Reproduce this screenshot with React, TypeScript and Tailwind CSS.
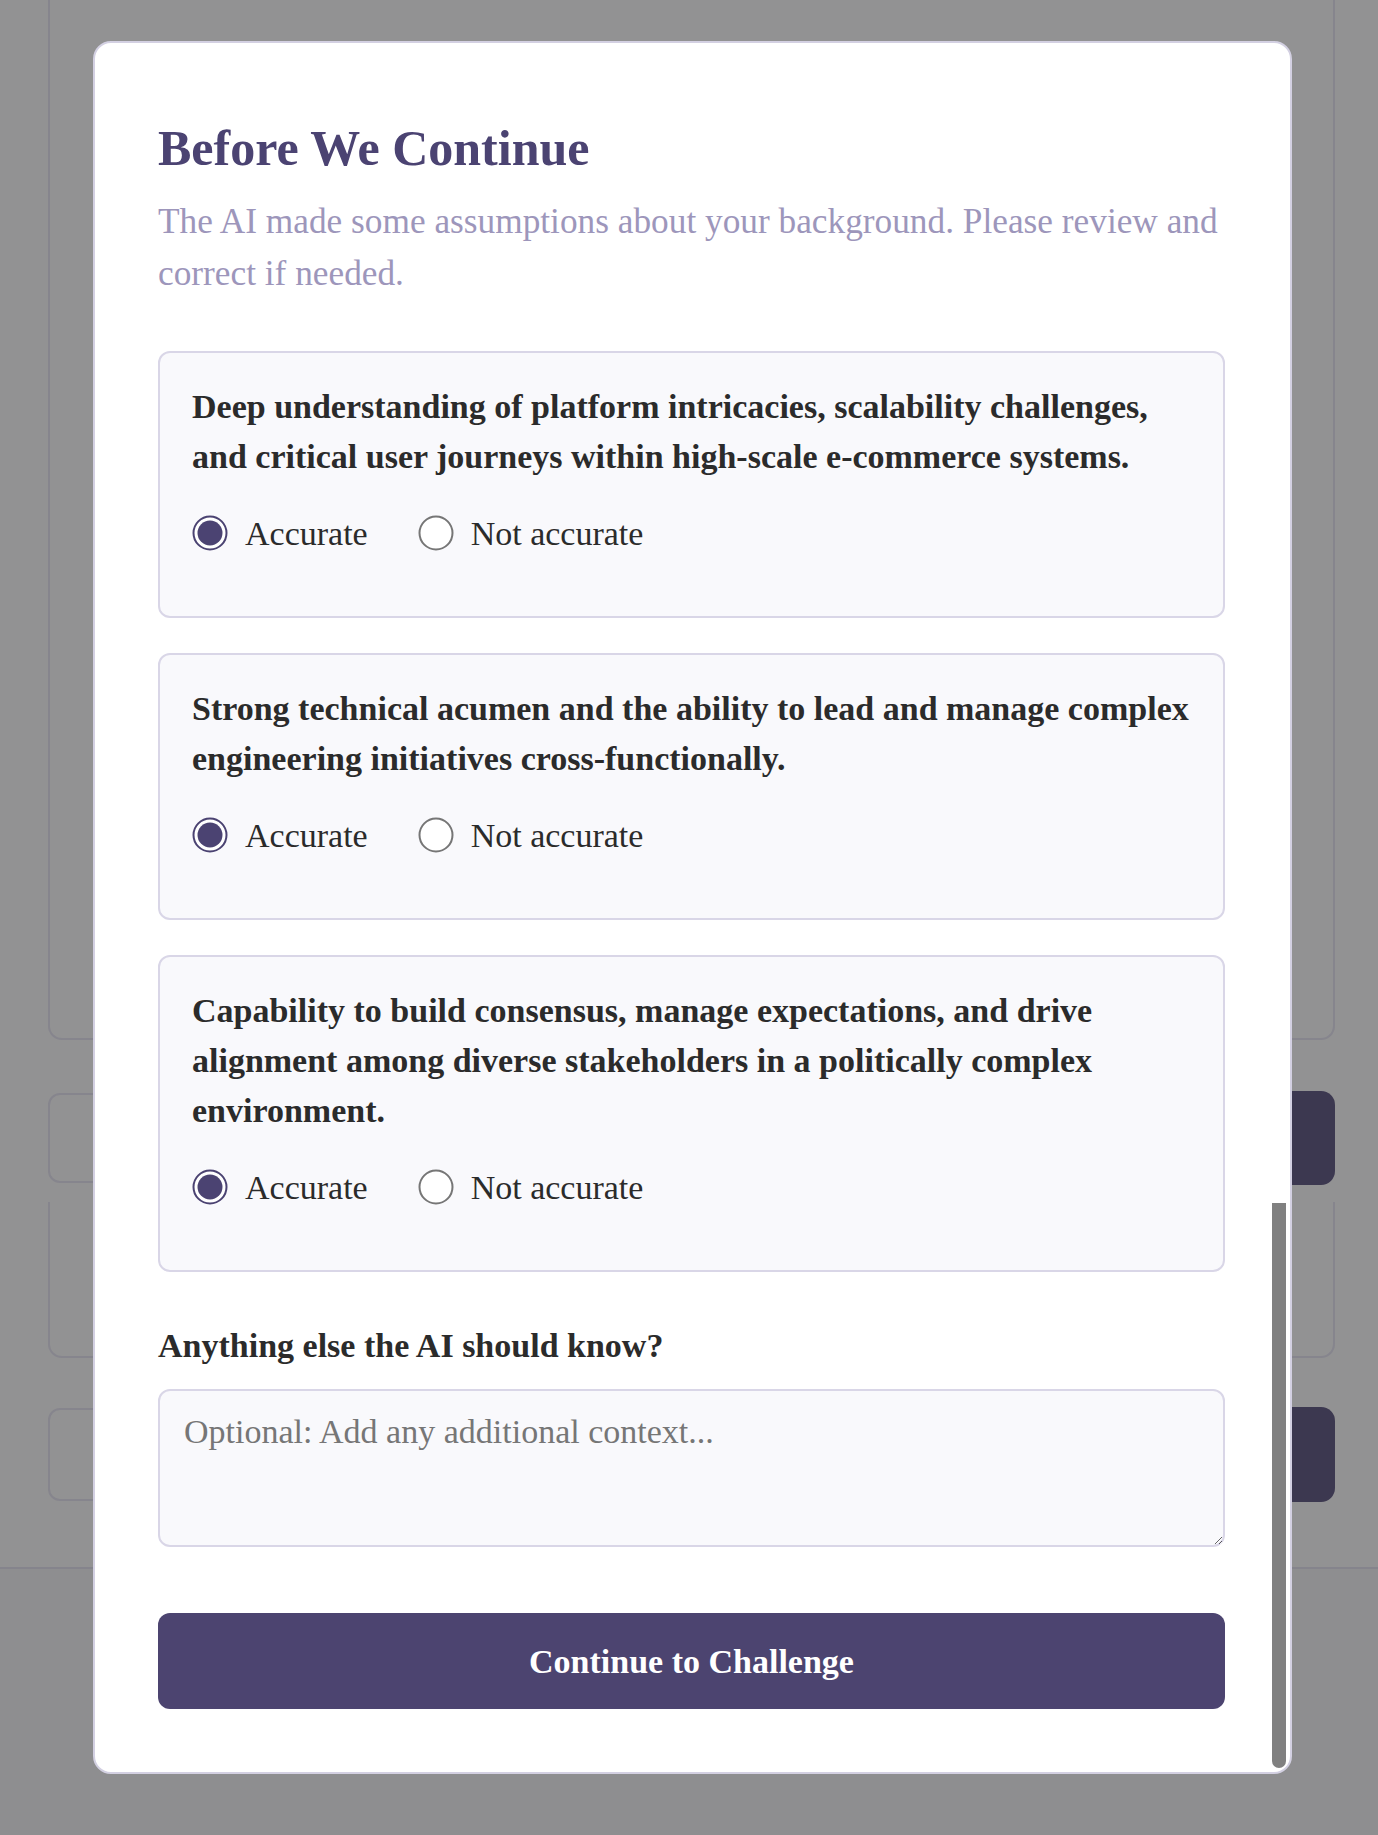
import React from "react";

const claims = [
  "Deep understanding of platform intricacies, scalability challenges, and critical user journeys within high-scale e-commerce systems.",
  "Strong technical acumen and the ability to lead and manage complex engineering initiatives cross-functionally.",
  "Capability to build consensus, manage expectations, and drive alignment among diverse stakeholders in a politically complex environment.",
];

function Radio({ checked }: { checked: boolean }) {
  return (
    <svg width="36" height="36" viewBox="0 0 36 36" className="shrink-0">
      <circle
        cx="18"
        cy="18"
        r="16.5"
        fill="#ffffff"
        stroke={checked ? "#4b4372" : "#767676"}
        strokeWidth="2"
      />
      {checked && <circle cx="18" cy="18" r="12.5" fill="#4b4372" />}
    </svg>
  );
}

function ClaimCard({ text }: { text: string }) {
  return (
    <div className="rounded-[12px] border-2 border-[#d9d6e7] bg-[#f9f9fc] px-8 pt-[29px] pb-[65px]">
      <p className="text-[34px] leading-[50px] font-bold text-[#2b2b2b]">{text}</p>
      <div className="mt-[33px] flex h-[36px] items-center gap-[50px] text-[34px] text-[#2b2b2b]">
        <label className="flex items-center gap-[17px]">
          <Radio checked />
          <span>Accurate</span>
        </label>
        <label className="flex items-center gap-[17px]">
          <Radio checked={false} />
          <span>Not accurate</span>
        </label>
      </div>
    </div>
  );
}

export default function App() {
  return (
    <div className="relative h-[1835px] w-[1378px] overflow-hidden bg-[#929293] font-['Liberation_Serif',serif]">
      {/* Page behind the overlay */}
      <div className="pl-[48px] pr-[43px]">
        <div className="h-[1040px] rounded-b-[14px] border-x-2 border-b-2 border-[#86858d]" />

        <div className="mt-[51px] flex h-[94px] items-center gap-4">
          <div className="h-[90px] flex-1 rounded-[12px] border-2 border-[#86858d]" />
          <div className="h-[94px] w-[240px] rounded-[14px] bg-[#3c3850]" />
        </div>

        <div className="mt-[17px] h-[156px] rounded-b-[14px] border-x-2 border-b-2 border-[#86858d]" />

        <div className="mt-[49px] flex h-[95px] items-center gap-4">
          <div className="h-[93px] flex-1 rounded-[12px] border-2 border-[#86858d]" />
          <div className="h-[95px] w-[240px] rounded-[14px] bg-[#3c3850]" />
        </div>
      </div>
      <div className="mt-[65px] h-[300px] border-t-2 border-[#85848c] bg-[#8e8e90]" />

      {/* Modal */}
      <div className="absolute left-[93px] top-[41px] h-[1733px] w-[1199px] overflow-hidden rounded-[18px] border-2 border-[#d3d0e2] bg-white">
        <div className="pl-[63px] pr-[65px] pt-[75px]">
          <h2 className="text-[50px] leading-[60px] font-bold text-[#4b4372]">Before We Continue</h2>
          <p className="mt-[18px] text-[35.3px] leading-[52px] text-[#9d96bb]">
            The AI made some assumptions about your background. Please review and correct if needed.
          </p>

          <div className="mt-[51px] flex flex-col gap-[35px]">
            {claims.map((c, i) => (
              <ClaimCard key={i} text={c} />
            ))}
          </div>

          <div className="mt-[49px] text-[34px] leading-[50px] font-bold text-[#2b2b2b]">
            Anything else the AI should know?
          </div>
          <textarea
            placeholder="Optional: Add any additional context..."
            className="mt-[18px] block h-[158px] w-full rounded-[12px] border-2 border-[#d9d6e7] bg-[#f9f9fc] px-[24px] pt-[16px] text-[34px] leading-[50px] text-[#2b2b2b] placeholder:text-[#767676] outline-none"
          />

          <button className="mt-[66px] flex h-[96px] w-full items-center justify-center rounded-[12px] bg-[#4c4470] text-[34px] font-bold text-white">
            Continue to Challenge
          </button>
        </div>

        {/* scrollbar thumb */}
        <div className="absolute bottom-[4px] right-[4px] top-[1160px] w-[14px] rounded-b-full bg-[#808080]" />
      </div>
    </div>
  );
}
